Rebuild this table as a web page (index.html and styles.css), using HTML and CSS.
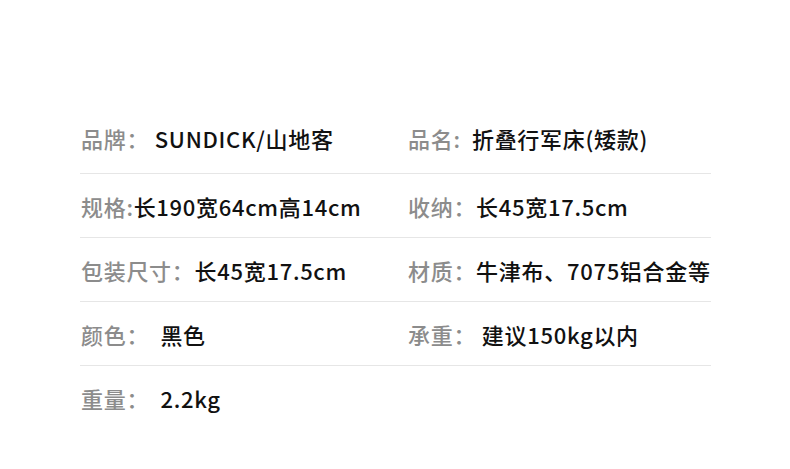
FILE: index.html
```html
<!DOCTYPE html>
<html lang="zh-CN">
<head>
    <meta charset="UTF-8">
    <meta name="viewport" content="width=device-width, initial-scale=1.0">
    <title>产品参数</title>
    <link rel="stylesheet" href="styles.css">
</head>
<body>
    <div class="canshu">
        <div class="linha">
            <div class="item"><span class="rotulo">品牌：</span><span class="valor"> SUNDICK/山地客</span></div>
            <div class="item"><span class="rotulo">品名:</span><span class="valor">  折叠行军床(矮款)</span></div>
        </div>
        <div class="linha">
            <div class="item"><span class="rotulo">规格:</span><span class="valor">长190宽64cm高14cm</span></div>
            <div class="item"><span class="rotulo">收纳：</span><span class="valor">长45宽17.5cm</span></div>
        </div>
        <div class="linha">
            <div class="item"><span class="rotulo">包装尺寸：</span><span class="valor">长45宽17.5cm</span></div>
            <div class="item"><span class="rotulo">材质：</span><span class="valor">牛津布、7075铝合金等</span></div>
        </div>
        <div class="linha">
            <div class="item"><span class="rotulo">颜色：</span><span class="valor">  黑色</span></div>
            <div class="item"><span class="rotulo">承重：</span><span class="valor"> 建议150kg以内</span></div>
        </div>
        <div class="linha">
            <div class="item"><span class="rotulo">重量：</span><span class="valor">  2.2kg</span></div>
            <div class="item"></div>
        </div>
    </div>
</body>
</html>
```

FILE: styles.css
```css
body {
    margin: 0;
    background-color: #fff;
    font-family: "Noto Sans CJK SC", "Noto Sans", sans-serif;
}

.canshu {
    width: 631px;
    margin-left: 80px;
    padding-top: 110px;
}

.linha {
    display: flex;
    height: 63px;
    border-bottom: 1px solid #e6e6e6;
}

/* primeira linha: texto um pouco mais alto */
.linha:first-child {
    height: 56px;
    padding-bottom: 7px;
}

.linha:last-child {
    border-bottom: none;
}

.item {
    display: flex;
    align-items: center;
    white-space: pre;
    font-size: 22px;
    font-weight: 500;
    letter-spacing: 0.7px;
}

.item:first-child {
    width: 327px;
    padding-left: 1px;
}

.rotulo {
    color: #8c8c8c;
}

.valor {
    color: #111;
}
```
